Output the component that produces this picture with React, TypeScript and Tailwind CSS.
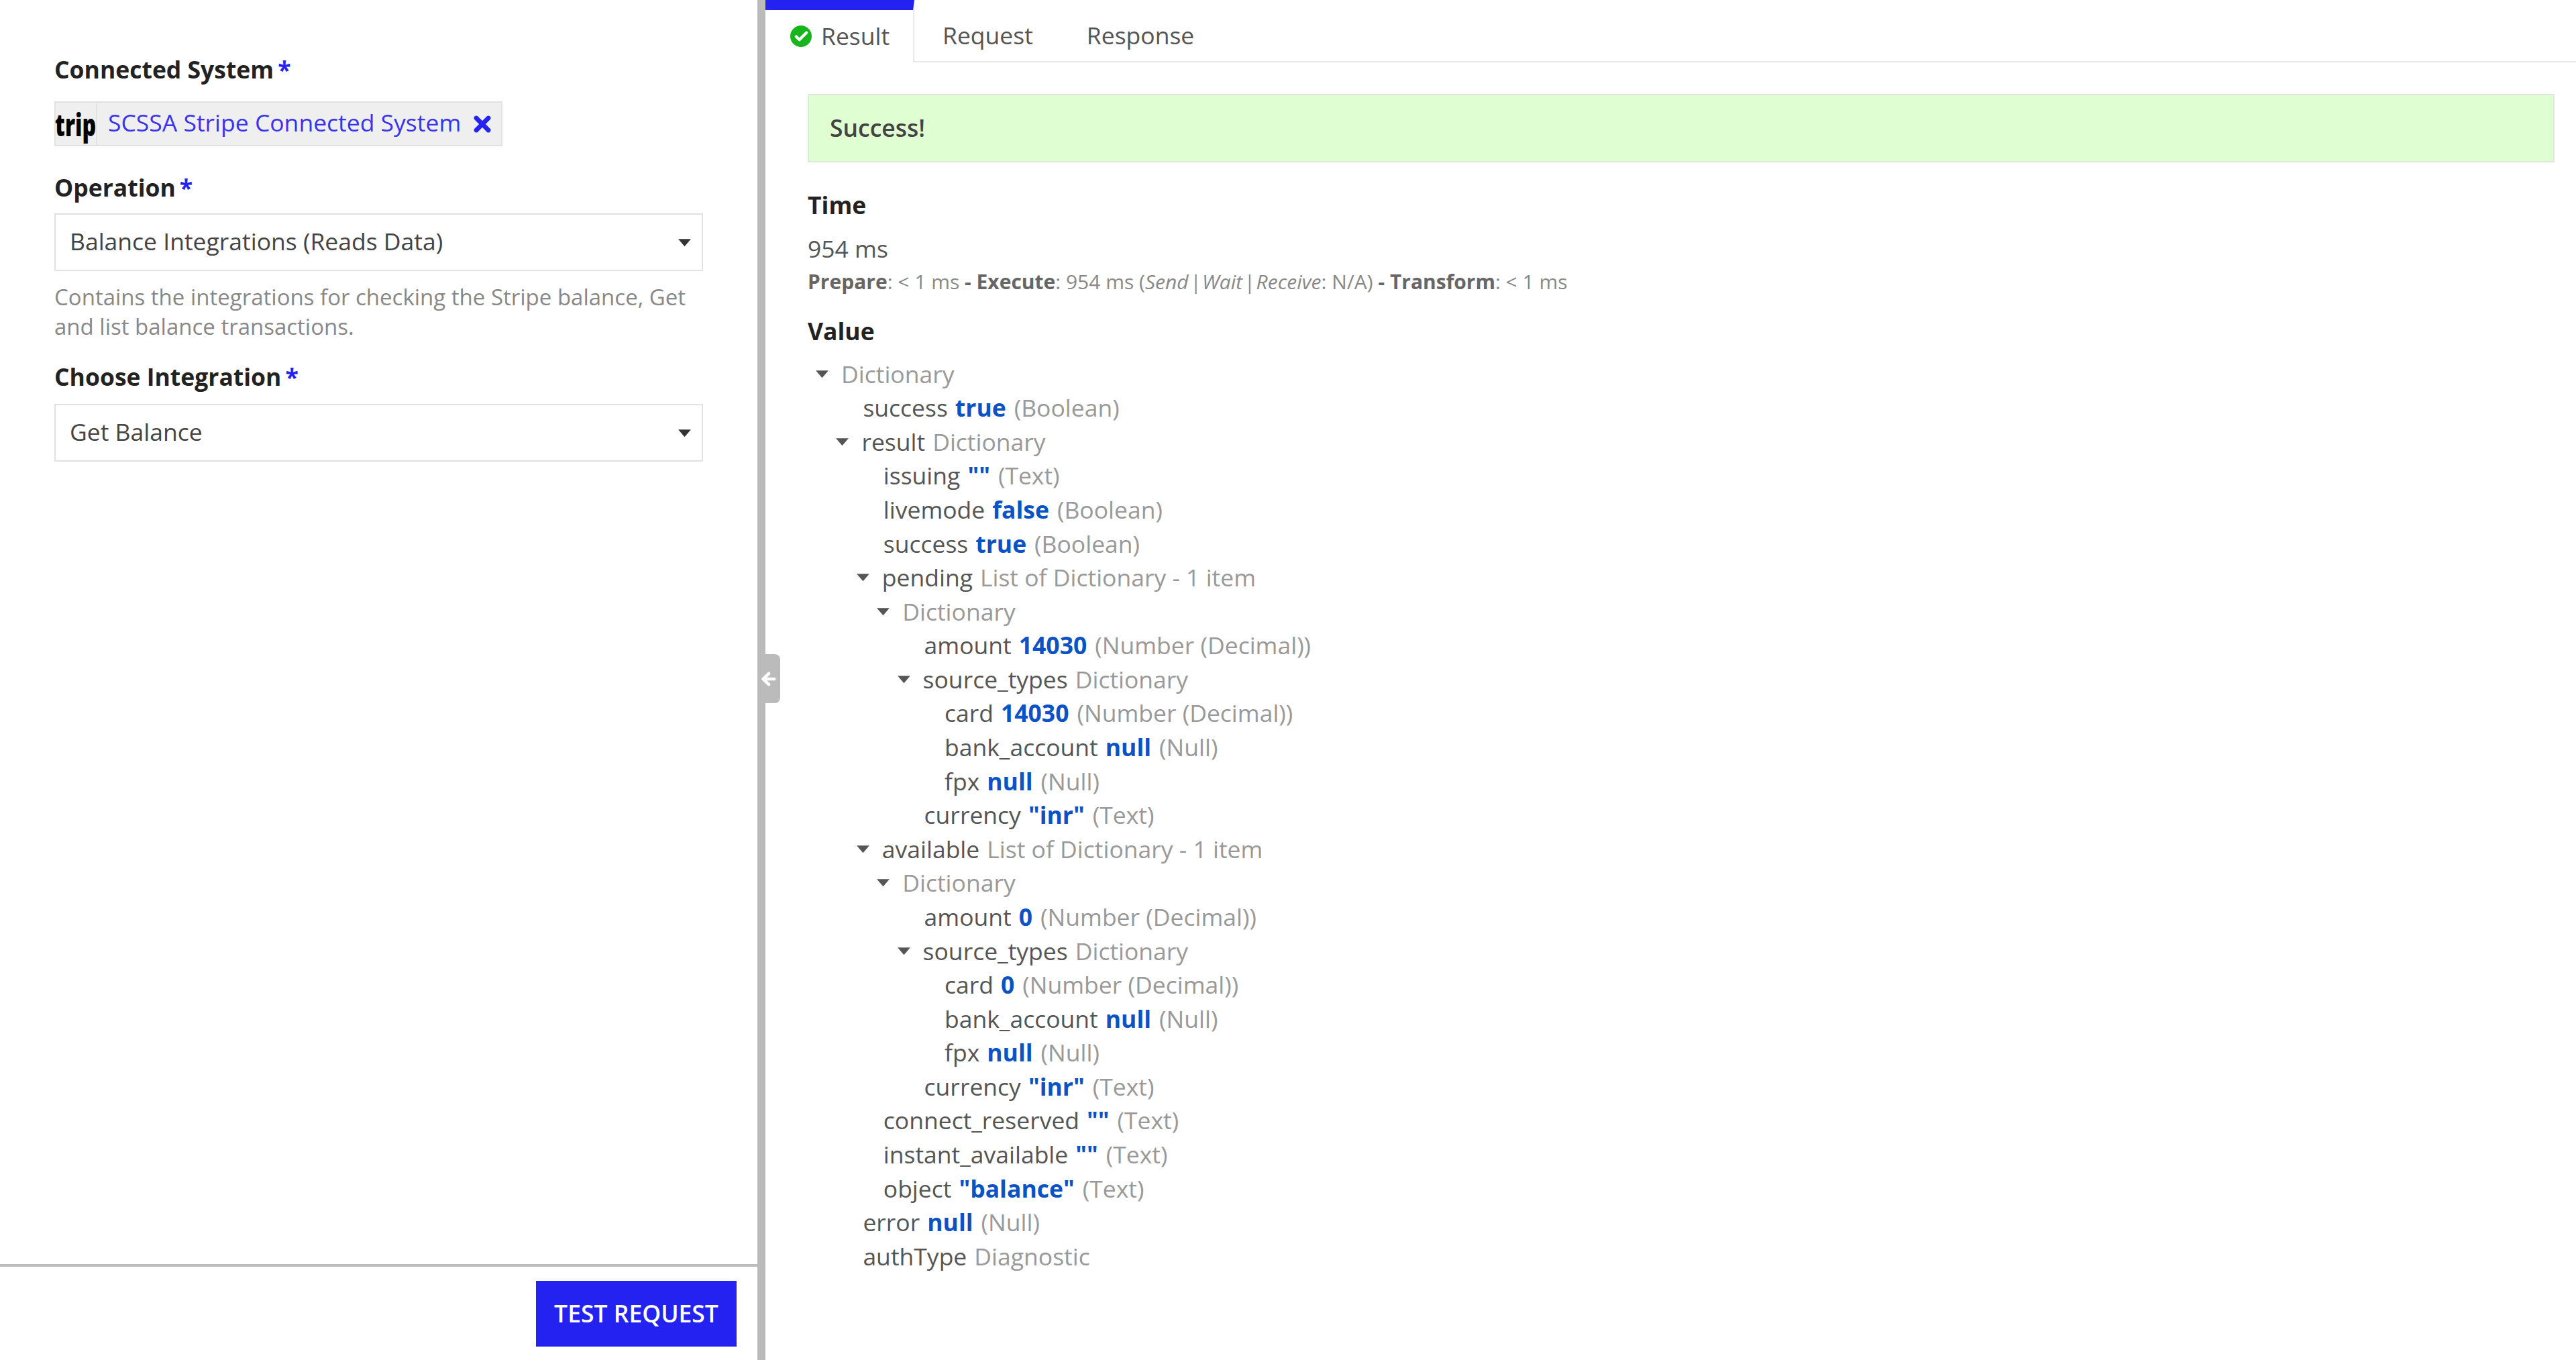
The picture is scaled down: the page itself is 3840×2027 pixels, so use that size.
import React from 'react';
import { ArrowLeft, Check, X } from 'lucide-react';

type Row = { level: number; arrow?: boolean; name?: string; value?: string; type?: string };

const ROWS: Row[] = [
  { level: 0, arrow: true, type: 'Dictionary' },
  { level: 1, name: 'success', value: 'true', type: '(Boolean)' },
  { level: 1, arrow: true, name: 'result', type: 'Dictionary' },
  { level: 2, name: 'issuing', value: '""', type: '(Text)' },
  { level: 2, name: 'livemode', value: 'false', type: '(Boolean)' },
  { level: 2, name: 'success', value: 'true', type: '(Boolean)' },
  { level: 2, arrow: true, name: 'pending', type: 'List of Dictionary - 1 item' },
  { level: 3, arrow: true, type: 'Dictionary' },
  { level: 4, name: 'amount', value: '14030', type: '(Number (Decimal))' },
  { level: 4, arrow: true, name: 'source_types', type: 'Dictionary' },
  { level: 5, name: 'card', value: '14030', type: '(Number (Decimal))' },
  { level: 5, name: 'bank_account', value: 'null', type: '(Null)' },
  { level: 5, name: 'fpx', value: 'null', type: '(Null)' },
  { level: 4, name: 'currency', value: '"inr"', type: '(Text)' },
  { level: 2, arrow: true, name: 'available', type: 'List of Dictionary - 1 item' },
  { level: 3, arrow: true, type: 'Dictionary' },
  { level: 4, name: 'amount', value: '0', type: '(Number (Decimal))' },
  { level: 4, arrow: true, name: 'source_types', type: 'Dictionary' },
  { level: 5, name: 'card', value: '0', type: '(Number (Decimal))' },
  { level: 5, name: 'bank_account', value: 'null', type: '(Null)' },
  { level: 5, name: 'fpx', value: 'null', type: '(Null)' },
  { level: 4, name: 'currency', value: '"inr"', type: '(Text)' },
  { level: 2, name: 'connect_reserved', value: '""', type: '(Text)' },
  { level: 2, name: 'instant_available', value: '""', type: '(Text)' },
  { level: 2, name: 'object', value: '"balance"', type: '(Text)' },
  { level: 1, name: 'error', value: 'null', type: '(Null)' },
  { level: 1, name: 'authType', type: 'Diagnostic' },
];

function Caret({ className }: { className: string }) {
  return (
    <svg viewBox="0 0 20 12" className={className}>
      <path d="M1 1h18l-9 10.5z" fill="currentColor" />
    </svg>
  );
}

function Label({ text }: { text: string }) {
  return (
    <div className="h-12 leading-[48px] text-[35.5px] font-bold text-[#222]">
      {text}
      <span className="ml-1.5 text-[#2322f0]">*</span>
    </div>
  );
}

function Select({ value }: { value: string }) {
  return (
    <div className="h-[86px] w-[967px] border-2 border-[#e2e2e2] bg-white pl-[21px] pr-[15px] flex items-center justify-between text-[35.5px] text-[#444]">
      <span className="pb-[2px]">{value}</span>
      <Caret className="w-[21px] h-[13px] text-[#333]" />
    </div>
  );
}

function TreeRow({ row }: { row: Row }) {
  const left = 2 + row.level * 30.4;
  return (
    <div className="h-[50.58px] flex items-center text-[35.5px] whitespace-pre" style={{ paddingLeft: left }}>
      {row.arrow ? (
        <span className="w-[48px] shrink-0 pl-[9px] flex items-center">
          <Caret className="w-[21px] h-[13px] text-[#555]" />
        </span>
      ) : (
        <span className="w-[50px] shrink-0" />
      )}
      {row.name && <span className="text-[#555] mr-[11px]">{row.name}</span>}
      {row.value && <span className="font-bold text-[#0b52c4] mr-[12px]">{row.value}</span>}
      <span className="text-[#999]">{row.type}</span>
    </div>
  );
}

export default function App() {
  return (
    <div className="relative flex h-screen w-full overflow-hidden bg-white font-['Open_Sans',sans-serif]">
      {/* Left: integration form */}
      <div className="w-[1129px] shrink-0 flex flex-col">
        <div className="pl-[81px] pt-[79px]">
          <Label text="Connected System" />
          <div className="mt-6 h-[67px] w-[668px] flex items-center border-2 border-[#e2e2e2] bg-[#efefef]">
            <div className="w-[62px] h-full shrink-0 border-r-2 border-[#e4e4e4] flex items-center justify-center">
              <span className="scale-x-[0.7] text-[46px] font-extrabold text-black leading-none">trip</span>
            </div>
            <span className="ml-[16px] pb-1 text-[35.5px] text-[#3a33ee]">SCSSA Stripe Connected System</span>
            <X className="ml-[14px] w-[36px] h-[36px] text-[#2322f0]" strokeWidth={4.5} />
          </div>
          <div className="mt-[37px]">
            <Label text="Operation" />
          </div>
          <div className="mt-[15px]">
            <Select value="Balance Integrations (Reads Data)" />
          </div>
          <p className="mt-[17px] w-[960px] text-[33px] leading-[44px] text-[#888]">
            Contains the integrations for checking the Stripe balance, Get and list balance transactions.
          </p>
          <div className="mt-[28px]">
            <Label text="Choose Integration" />
          </div>
          <div className="mt-[17px]">
            <Select value="Get Balance" />
          </div>
        </div>
        <div className="mt-auto h-[143px] border-t-4 border-[#bdbdbd] pt-[21px] pr-[31px] flex justify-end items-start">
          <button className="w-[299px] h-[98px] bg-[#2322f0] text-white text-[35.5px] font-semibold">TEST REQUEST</button>
        </div>
      </div>

      {/* Splitter */}
      <div className="w-3 shrink-0 bg-[#bbbbbb]" />
      <div className="absolute left-[1129px] top-[975px] w-[34px] h-[73px] rounded-r-lg bg-[#bbbbbb] flex items-center justify-center">
        <ArrowLeft className="w-[28px] h-[28px] text-white" strokeWidth={4} />
      </div>

      {/* Right: results */}
      <div className="flex-1 min-w-0">
        <div className="h-[93px] flex text-[35.5px] text-[#555]">
          <div className="w-[222px] h-[93px] bg-white border-t-[15px] border-[#2322f0] border-r-2 border-r-[#e8e8e8] flex items-center pl-[37px]">
            <span className="w-[32px] h-[32px] rounded-full bg-[#17b51c] flex items-center justify-center">
              <Check className="w-[23px] h-[23px] text-white" strokeWidth={4.5} />
            </span>
            <span className="ml-[14px]">Result</span>
          </div>
          <div className="flex-1 pt-[15px] flex items-center gap-[80px] pl-[42px] border-b-2 border-[#e8e8e8]">
            <span>Request</span>
            <span>Response</span>
          </div>
        </div>
        <div className="ml-[63px] mr-[32px]">
          <div className="mt-[47px] h-[102px] border-2 border-[#dde8d8] bg-[#dfffd2] flex items-center pl-[31px] text-[35.5px] font-semibold text-[#444]">
            Success!
          </div>
          <div className="mt-[39px] h-12 leading-[48px] text-[35.5px] font-bold text-[#222]">Time</div>
          <div className="mt-[17px] h-12 leading-[48px] text-[35.5px] text-[#555]">954 ms</div>
          <div className="mt-[6px] h-10 leading-[40px] text-[30px] text-[#888] whitespace-pre">
            <b className="font-bold text-[#666]">Prepare</b>: &lt; 1 ms <b className="font-bold text-[#666]">- Execute</b>: 954 ms (
            <i>
              Send<span className="mx-[2px]">|</span>Wait<span className="mx-[2px]">|</span>Receive
            </i>
            : N/A) <b className="font-bold text-[#666]">- Transform</b>: &lt; 1 ms
          </div>
          <div className="mt-[29px] h-12 leading-[48px] text-[35.5px] font-bold text-[#222]">Value</div>
          <div className="mt-[15px]">
            {ROWS.map((row, i) => (
              <TreeRow key={i} row={row} />
            ))}
          </div>
        </div>
      </div>
    </div>
  );
}
